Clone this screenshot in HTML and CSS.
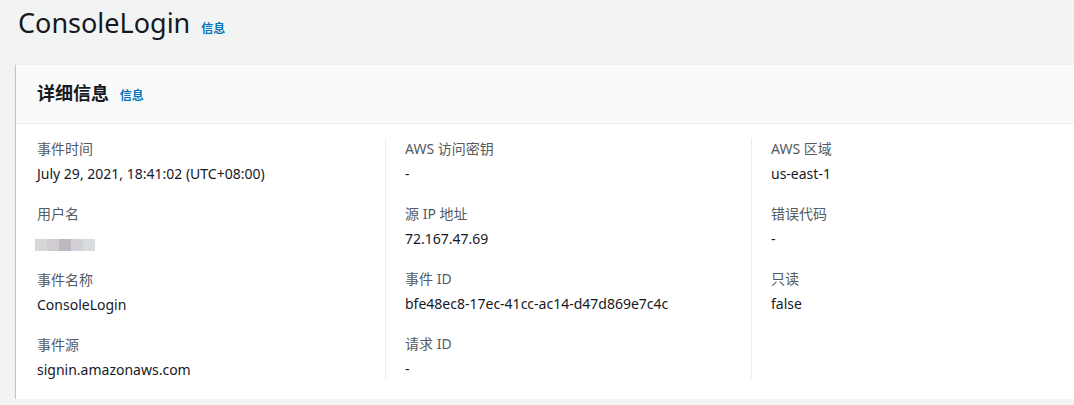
FILE: index.html
```html
<!DOCTYPE html>
<html>
	<head>
		<title>ConsoleLogin</title>
		<link rel="stylesheet" href="styles.css">
	</head>
	<body>
		<h1 class="page-title">ConsoleLogin <a class="info" href="#">信息</a></h1>

		<div class="card">
			<div class="card-head">
				<h2>详细信息 <a class="info" href="#">信息</a></h2>
			</div>
			<div class="card-body">
				<div class="col">
					<div class="item">
						<div class="label">事件时间</div>
						<div class="value">July 29, 2021, 18:41:02 (UTC+08:00)</div>
					</div>
					<div class="item">
						<div class="label">用户名</div>
						<div class="value">
							<span class="blur">
								<i class="b1"></i><i class="b2"></i><i class="b3"></i><i class="b4"></i><i class="b5"></i>
							</span>
						</div>
					</div>
					<div class="item">
						<div class="label">事件名称</div>
						<div class="value">ConsoleLogin</div>
					</div>
					<div class="item">
						<div class="label">事件源</div>
						<div class="value">signin.amazonaws.com</div>
					</div>
				</div>
				<div class="col">
					<div class="item">
						<div class="label">AWS 访问密钥</div>
						<div class="value">-</div>
					</div>
					<div class="item">
						<div class="label">源 IP 地址</div>
						<div class="value">72.167.47.69</div>
					</div>
					<div class="item">
						<div class="label">事件 ID</div>
						<div class="value">bfe48ec8-17ec-41cc-ac14-d47d869e7c4c</div>
					</div>
					<div class="item">
						<div class="label">请求 ID</div>
						<div class="value">-</div>
					</div>
				</div>
				<div class="col">
					<div class="item">
						<div class="label">AWS 区域</div>
						<div class="value">us-east-1</div>
					</div>
					<div class="item">
						<div class="label">错误代码</div>
						<div class="value">-</div>
					</div>
					<div class="item">
						<div class="label">只读</div>
						<div class="value">false</div>
					</div>
				</div>
			</div>
		</div>
	</body>
</html>
```

FILE: styles.css
```css
body {
	margin: 0;
	padding: 0 0 0 16px;
	background: #f2f3f3;
	color: #16191f;
	font-family: "Noto Sans", "Noto Sans CJK SC", sans-serif;
	font-size: 14px;
	overflow: hidden;
}

.info {
	color: #0073bb;
	font-size: 12px;
	font-weight: bold;
	text-decoration: none;
	margin-left: 4px;
}

.page-title {
	margin: 0;
	padding: 5px 0 0 2px;
	height: 64px;
	box-sizing: border-box;
	font-size: 27px;
	font-weight: normal;
	line-height: 36px;
}

.card {
	width: 1100px;
	background: #fff;
	border-top: 1px solid #eaeded;
	box-shadow: 0 1px 1px 0 rgba(0, 28, 36, 0.3),
		1px 1px 1px 0 rgba(0, 28, 36, 0.15),
		-1px 1px 1px 0 rgba(0, 28, 36, 0.15);
}

.card-head {
	background: #fafafa;
	border-bottom: 1px solid #eaeded;
	height: 58px;
	padding: 0 21px;
	display: flex;
	align-items: center;
}
.card-head h2 {
	margin: 0;
	font-size: 18px;
	font-weight: bold;
	line-height: 24px;
}
.card-head .info {
	margin-left: 6px;
}

.card-body {
	display: grid;
	grid-template-columns: 348px 366px 366px;
	padding: 14px 21px 20px;
}
.col + .col {
	border-left: 1px solid #eaeded;
	padding-left: 19px;
}

.item {
	margin-bottom: 18px;
}
.item:last-child {
	margin-bottom: -2px;
}
.label {
	color: #545b64;
	line-height: 22px;
	margin-bottom: 3px;
}
.value {
	line-height: 22px;
}

.blur {
	display: inline-grid;
	grid-template-columns: repeat(5, 12px);
	grid-template-rows: 8px 12px;
	vertical-align: middle;
	margin: 2px 0 0 -2px;
}
.blur i:nth-child(n) {
	grid-row: 2;
	height: 12px;
}
.b1 { background: #d9d6d8; }
.b2 { background: #cfcdd2; }
.b3 { background: #bdb8c2; }
.b4 { background: #d2d0d4; }
.b5 { background: #d8dbe0; }
```
